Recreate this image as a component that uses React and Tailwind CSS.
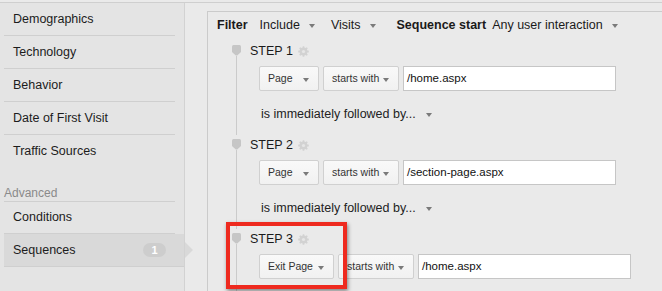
import React from 'react'

const Caret = ({ className = '' }) => (
  <span className={`inline-block w-0 h-0 border-l-[3.5px] border-r-[3.5px] border-t-[4px] border-l-transparent border-r-transparent border-t-[#7a7a7a] ${className}`} />
)

function Marker() {
  return (
    <svg width="9" height="11" viewBox="0 0 9 11" className="block">
      <path d="M1.5 0 H7.5 Q9 0 9 1.5 V7 L5.2 10.5 H3.8 L0 7 V1.5 Q0 0 1.5 0 Z" fill="#c6c6c6" />
    </svg>
  )
}

function Gear() {
  const teeth = [0, 45, 90, 135, 180, 225, 270, 315]
  return (
    <svg width="11" height="11" viewBox="0 0 11 11" className="block">
      {teeth.map(a => (
        <rect key={a} x="4.6" y="0.2" width="1.8" height="2.4" rx="0.5" fill="#d2d2d2" transform={`rotate(${a} 5.5 5.5)`} />
      ))}
      <circle cx="5.5" cy="5.5" r="3.9" fill="#d2d2d2" />
      <circle cx="5.5" cy="5.5" r="1.6" fill="#e6e6e6" />
    </svg>
  )
}

function Btn({ label, w }) {
  return (
    <div className={`${w} h-[25px] flex items-center justify-between pl-[8px] pr-[9px] border border-[#d0d0d0] rounded-[2px] bg-gradient-to-b from-[#f9f9f9] to-[#f1f1f1] text-[10.5px] text-[#333]`}>
      <span>{label}</span>
      <Caret className="mt-[2px]" />
    </div>
  )
}

function Step({ n, first, value, last }) {
  return (
    <div className="flex">
      <div className="w-[9px] ml-[24px] flex flex-col items-center">
        <div className="mt-[4px]"><Marker /></div>
        <div className="w-px flex-1 bg-[#cbcbcb]" />
      </div>
      <div className={`ml-[9px] ${last ? 'pb-[40px]' : 'pb-[10px]'}`}>
        <div className="h-[20px] flex items-center gap-[5px] text-[12.5px] text-[#1a1a1a]">
          <span>STEP {n}</span>
          <Gear />
        </div>
        <div className="mt-[5px] ml-[9px] flex items-center gap-[4px]">
          <Btn label={first} w={first === 'Page' ? 'w-[60px]' : 'w-[75px]'} />
          <Btn label="starts with" w="w-[76px]" />
          <div className="w-[213px] h-[25px] border border-[#c6c6c6] bg-white flex items-center pl-[3px] text-[11.5px] text-[#111]">
            {value}
          </div>
        </div>
        {!last && (
          <div className="mt-[12px] ml-[11px] h-[22px] flex items-center gap-[10px] text-[12.5px] text-[#222]">
            <span>is immediately followed by...</span>
            <Caret className="mt-[2px]" />
          </div>
        )}
      </div>
    </div>
  )
}

const items = ['Demographics', 'Technology', 'Behavior', 'Date of First Visit']

export default function App() {
  return (
    <div className="relative w-[662px] h-[291px] overflow-hidden bg-[#eaeaea] font-['Liberation_Sans',Arial,sans-serif]">
      <div className="mt-[2px] border-t border-[#cfcfcf] flex h-[289px]">
        <aside className="w-[185px] shrink-0 bg-[#e4e4e4] border-r border-[#d2d2d2] text-[12.5px] text-[#1c1c1c]">
          {items.map(t => (
            <div key={t} className="ml-[4px] mr-[9px] h-[33px] border-b border-[#cfcfcf] flex items-center pl-[9px]">{t}</div>
          ))}
          <div className="ml-[4px] mr-[9px] h-[33px] flex items-center pl-[9px]">Traffic Sources</div>
          <div className="ml-[4px] mr-[9px] h-[34px] border-b border-[#cfcfcf] flex items-end pb-[2px] leading-none text-[12px] text-[#8a8a8a]">Advanced</div>
          <div className="ml-[4px] mr-[9px] h-[32px] border-b border-[#cfcfcf] flex items-center pl-[9px]">Conditions</div>
          <div className="relative ml-[4px] h-[33px] border-b border-[#cfcfcf] bg-[#d9d9d9] flex items-center pl-[9px]">
            <span>Sequences</span>
            <span className="ml-auto mr-[18px] w-[23px] h-[14px] rounded-full bg-[#cdcdcd] text-white text-[11px] font-bold flex items-center justify-center">1</span>
            <span className="absolute right-[-9px] top-[8px] w-0 h-0 border-t-[8px] border-b-[8px] border-l-[8px] border-t-transparent border-b-transparent border-l-[#d9d9d9]" />
          </div>
        </aside>
        <main className="flex-1 pl-[22px] pt-[8px]">
          <div className="w-[600px] h-full border-l border-t border-[#cbcbcb] bg-[#eaeaea]">
            <div className="h-[26px] pl-[9px] flex items-center text-[12.5px] text-[#1a1a1a]">
              <span className="font-bold">Filter</span>
              <span className="ml-[12px]">Include</span>
              <Caret className="ml-[9px] mt-[2px]" />
              <span className="ml-[16px]">Visits</span>
              <Caret className="ml-[9px] mt-[2px]" />
              <span className="ml-[21px] font-bold">Sequence start</span>
              <span className="ml-[6px]">Any user interaction</span>
              <Caret className="ml-[9px] mt-[2px]" />
            </div>
            <div className="mt-[3px]">
              <Step n={1} first="Page" value="/home.aspx" />
              <Step n={2} first="Page" value="/section-page.aspx" />
              <Step n={3} first="Exit Page" value="/home.aspx" last />
            </div>
          </div>
        </main>
      </div>
      <div className="absolute left-[226px] top-[222px] w-[121px] h-[67px] border-[4px] border-[#ee2a1f] shadow-[1px_2px_4px_rgba(0,0,0,0.45)]" />
    </div>
  )
}
